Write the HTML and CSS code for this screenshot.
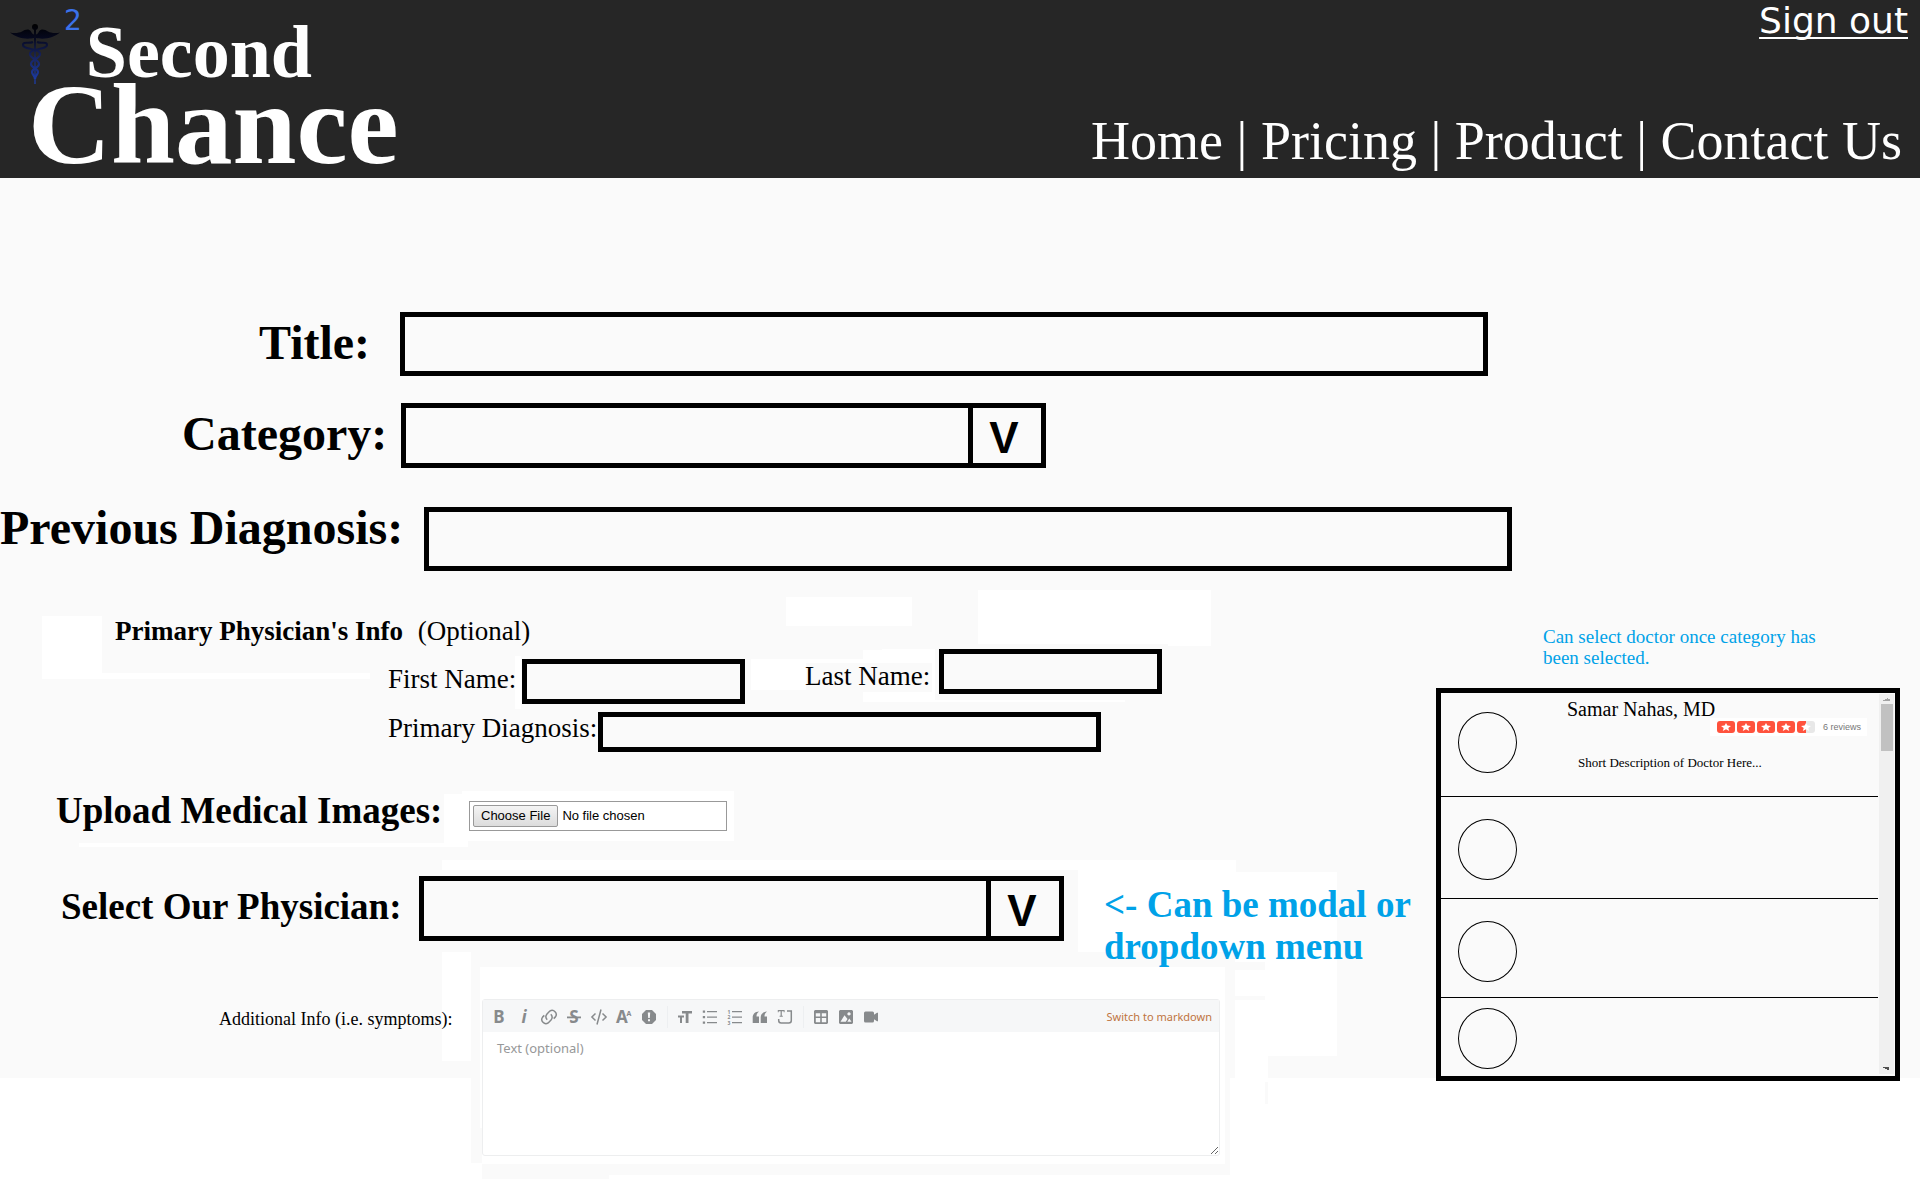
FILE: index.html
```html
<!DOCTYPE html>
<html lang="en">
<head>
<meta charset="utf-8">
<title>Second Chance</title>
<link rel="stylesheet" href="styles.css">
</head>
<body>
<header class="site-header">
  <a class="brand" href="#">
    <span class="brand-top">
      <svg class="brand-icon" viewBox="0 0 52 60" fill="none" aria-hidden="true">
        <defs>
          <linearGradient id="staff" gradientUnits="userSpaceOnUse" x1="0" y1="0" x2="0" y2="60">
            <stop offset="0" stop-color="#000"/><stop offset=".25" stop-color="#060920"/><stop offset=".55" stop-color="#172462"/><stop offset="1" stop-color="#1c3fae"/>
          </linearGradient>
        </defs>
        <g fill="url(#staff)">
          <circle cx="26" cy="3" r="3"/>
          <path d="M25 4h2l-.4 56h-1.200z"/>
          <path d="M25 14C21 15 14 15 9 13 6 12 3 10 1 8.500c5 1 9 .5 12-1 3-2 7-3 9 0 1 2 2 3 3 3zM27 14c4 1 11 1 16-1 3-1 6-3 8-4.500-5 1-9 .5-12-1-3-2-7-3-9 0-1 2-2 3-3 3z"/>
        </g>
        <g stroke="url(#staff)" stroke-width="2.200">
          <path d="M24 18c-4 2-10-1-10 3 0 5 17 3 17 9 0 5-9 5-9 10 0 4 7 4 7 8 0 3-3 3-3 7"/>
          <path d="M28 18c4 2 10-1 10 3 0 5-17 3-17 9 0 5 9 5 9 10 0 4-7 4-7 8 0 3 3 3 3 7"/>
        </g>
      </svg>
      <span class="brand-two">2</span>
      <span class="brand-second">Second</span>
    </span>
    <span class="brand-chance">Chance</span>
  </a>
  <div class="header-side">
    <a class="sign-out" href="#">Sign out</a>
    <nav class="main-nav">
      <a href="#">Home</a> | <a href="#">Pricing</a> | <a href="#">Product</a> | <a href="#">Contact Us</a>
    </nav>
  </div>
</header>

<main class="page">
  <svg class="backdrop" aria-hidden="true">
    <rect width="100%" height="900" fill="#fafafa"/>
    <path fill="#fff" d="M42 438h60v57h268v6H42zM515 478h6v53h-6zM786 419h126v29H786zM978 412h233v56h-43v-2H978zM751 481h112v-9h19v-1h53v51h190v2H863v-12h-57v0h-55zM462 613h272v50H468v6H79v-4h365v-49h18zM442 682h794v12h101v184h-69v22h-33V774H471v109h-29z"/>
    <path fill="#fafafa" d="M806 485h126v29H806zM419 692h659v82H419zM471 784h794v8h-40v26h40v4h-35v175H609v4H482v-16h-11zM1265 904h3v22h-3z"/>
    <path fill="#fff" d="M480 789h745v197H482v-36h-2z"/>
  </svg>

  <form class="consult">
    <div class="field field-title">
      <label class="label-xl" for="title">Title:</label>
      <input class="box" id="title" type="text">
    </div>
    <div class="field field-category">
      <label class="label-xl" for="category">Category:</label>
      <div class="picker"><select id="category"><option></option></select><span aria-hidden="true">V</span></div>
    </div>
    <div class="field field-previous">
      <label class="label-xl" for="previous">Previous Diagnosis:</label>
      <input class="box" id="previous" type="text">
    </div>

    <div class="lower">
      <div class="details">
        <fieldset class="physician">
          <legend><b>Primary Physician's Info</b> <span>(Optional)</span></legend>
          <div class="names">
            <div class="name first"><label for="first">First Name:</label><input class="box" id="first" type="text"></div>
            <div class="name last"><label for="last">Last Name:</label><input class="box" id="last" type="text"></div>
          </div>
          <div class="primary"><label for="primary">Primary Diagnosis:</label><input class="box" id="primary" type="text"></div>
        </fieldset>

        <div class="field field-upload">
          <label class="label-lg" for="images">Upload Medical Images:</label>
          <div class="upload"><input id="images" type="file"></div>
        </div>

        <div class="field field-select">
          <label class="label-lg" for="physician">Select Our Physician:</label>
          <div class="picker"><select id="physician"><option></option></select><span aria-hidden="true">V</span></div>
          <p class="note note-lg">&lt;- Can be modal or dropdown menu</p>
        </div>

        <div class="field field-info">
          <label for="info">Additional Info (i.e. symptoms):</label>
          <div class="editor">
            <div class="toolbar">
              <button type="button" aria-label="Bold"><svg viewBox="0 0 16 16"><text x="8" y="14" font-size="17" font-weight="700">B</text></svg></button>
              <button type="button" aria-label="Italic"><svg viewBox="0 0 16 16"><text x="8" y="14" font-size="17" font-weight="700" font-style="italic">i</text></svg></button>
              <button type="button" aria-label="Link"><svg viewBox="0 0 16 16" class="line"><path d="M6.200 10.700A4.300 4.300 0 0 1 6 5L8.800 2.100a4.100 4.100 0 0 1 5.600 5.800l-1.700 1.700M9.800 5.300a4.300 4.300 0 0 1 .2 5.700l-2.800 2.900a4.100 4.100 0 0 1-5.600-5.800l1.700-1.700"/></svg></button>
              <button type="button" aria-label="Strikethrough"><svg viewBox="0 0 16 16"><text x="8" y="14" font-size="17" font-weight="700">S</text><path d="M1 7.500h14v1.800H1z"/></svg></button>
              <button type="button" aria-label="Code"><svg viewBox="0 0 16 16" class="line"><path d="M4.500 4.500.9 8l3.600 3.500M11.500 4.500 15.100 8l-3.600 3.500M10 .5 6 15.500"/></svg></button>
              <button type="button" aria-label="Superscript"><svg viewBox="0 0 16 16"><text x="6" y="14" font-size="17" font-weight="700">A</text><text x="13" y="7" font-size="7" font-weight="700">A</text></svg></button>
              <button type="button" aria-label="Spoiler"><svg viewBox="0 0 16 16"><path fill-rule="evenodd" d="M5 1h6l4 4v6l-4 4H5l-4-4V5zM6.800 3.500 7.200 9h1.600l.4-5.500zM7 10.300v2h2v-2z"/></svg></button>
              <i class="rule"></i>
              <button type="button" aria-label="Heading"><svg viewBox="0 0 16 16"><path d="M5 2h10v2.500h-3.500V14H8.700V4.500H5zM1 6.500h6v1.900H5V14H3V8.400H1z"/></svg></button>
              <button type="button" aria-label="Bulleted list"><svg viewBox="0 0 16 16"><path d="M5 2h10v1.300H5zM5 7.500h10v1.300H5zM5 13h10v1.300H5zM.8 1.400h2.300v2.300H.8zM.8 7h2.300v2.300H.8zM.8 12.500h2.300v2.300H.8z"/></svg></button>
              <button type="button" aria-label="Numbered list"><svg viewBox="0 0 16 16"><path d="M5 2h10v1.300H5zM5 7.500h10v1.300H5zM5 13h10v1.300H5z"/><g font-size="5" font-weight="700"><text x="2" y="4.500">1</text><text x="2" y="10">2</text><text x="2" y="15.500">3</text></g></svg></button>
              <button type="button" aria-label="Quote"><svg viewBox="0 0 16 16"><path d="M7 2.500C5 4 4.500 5.500 4.500 7.500H7V14H.7V8.500C.7 5 3 2.800 7 2.500zM15 2.500c-2 1.500-2.500 3-2.500 5H15V14H8.700V8.500C8.700 5 11 2.800 15 2.500z"/></svg></button>
              <button type="button" aria-label="Code block"><svg viewBox="0 0 16 16"><path class="stroke" d="M10 2h4.300v9.500q0 2.500-2.500 2.500H4.200q-2.500 0-2.500-2.500V10"/><path d="M.8 1h6.800v2.200h-.9v-1H4.800v4.600h1v1H2.600v-1h1V2.200h-1.900v1H.8z"/></svg></button>
              <i class="rule"></i>
              <button type="button" aria-label="Table"><svg viewBox="0 0 16 16"><path fill-rule="evenodd" d="M2 1h12l1 1v12l-1 1H2l-1-1V2zM2.800 4.300v3.200h4.400V4.300zM8.800 4.300v3.200h4.400V4.300zM2.800 9v4.200h4.400V9zM8.800 9v4.200h4.400V9z"/></svg></button>
              <button type="button" aria-label="Image"><svg viewBox="0 0 16 16"><path fill-rule="evenodd" d="M2 1h12l1 1v12l-1 1H2l-1-1V2zM2.500 12.800l4-6.600 3 3.800-1.700 2.800zM9.300 12.800l2-3.300 2.200 3.300zM11 3.300a1.600 1.600 0 1 0 .01 0z"/></svg></button>
              <button type="button" aria-label="Video"><svg viewBox="0 0 16 16"><path d="M2.500 2.500h7q1.500 0 1.500 1.500v1.800l3-2h1v8.500h-1l-3-2V12q0 1.500-1.500 1.500h-7Q1 13.500 1 12V4q0-1.500 1.500-1.500z"/></svg></button>
              <a class="switch" href="#">Switch to markdown</a>
            </div>
            <textarea id="info" placeholder="Text (optional)"></textarea>
          </div>
        </div>
      </div>

      <aside class="doctors">
        <p class="note">Can select doctor once category has been selected.</p>
        <div class="panel">
          <ul class="doctor-list">
            <li>
              <span class="avatar"></span>
              <div class="doctor">
                <h2>Samar Nahas, MD</h2>
                <div class="rating">
                  <span class="star"></span><span class="star"></span><span class="star"></span><span class="star"></span><span class="star half"></span>
                  <span class="reviews">6 reviews</span>
                </div>
                <p>Short Description of Doctor Here...</p>
              </div>
            </li>
            <li><span class="avatar"></span></li>
            <li><span class="avatar"></span></li>
            <li><span class="avatar"></span></li>
          </ul>
          <div class="scroller" aria-hidden="true">
            <svg viewBox="0 0 7 3"><path d="M0 3V2h2V1h2V0h1v1h2v2z" fill="#a3a3a3"/></svg>
            <span class="thumb"></span>
            <svg viewBox="0 0 7 3"><path d="M0 0h6v3H4V2H2V1H0z" fill="#505050"/></svg>
          </div>
        </div>
      </aside>
    </div>
  </form>
</main>
</body>
</html>
```
FILE: styles.css
```css
* { box-sizing: border-box; }

body {
  margin: 0;
  background: #fff;
  color: #000;
  font-family: "Liberation Serif", "Times New Roman", serif;
}

p, h2, ul { margin: 0; padding: 0; font-weight: 400; }

input, select, textarea, button { font: inherit; border-radius: 0; }

/* Header */
.site-header {
  display: flex;
  justify-content: space-between;
  min-height: 178px;
  background: #262626;
}

.brand {
  display: flex;
  flex-direction: column;
  color: #fff;
  font-weight: 700;
  text-decoration: none;
}

.brand-top { display: flex; align-items: flex-start; padding-left: 9px; }
.brand-icon { width: 52px; height: 60px; margin-top: 24px; }

.brand-two {
  margin: 7px 4px 0 3px;
  color: #3b72ea;
  font: 28px/28px "DejaVu Sans", sans-serif;
}

.brand-second { margin-top: 19px; font-size: 74px; line-height: 66px; }
.brand-chance { padding-left: 28px; font-size: 115px; line-height: 80px; }

.header-side {
  display: flex;
  flex-direction: column;
  justify-content: space-between;
  align-items: flex-end;
  padding: 0 12px 7px 0;
}

.header-side a { color: #fff; text-decoration: none; }

.header-side .sign-out {
  font: 36px/42px "DejaVu Sans", sans-serif;
  text-decoration: underline 2px;
  text-underline-offset: 4px;
  text-decoration-skip-ink: none;
}

.main-nav { padding-right: 6px; color: #fff; font-size: 54px; line-height: 60px; }

/* Page */
.page { position: relative; isolation: isolate; padding: 134px 0 23px; }
.backdrop { position: absolute; inset: 0; z-index: -1; width: 100%; height: 100%; }

.field { display: flex; align-items: flex-start; }
.label-xl, .label-lg { flex: none; font-weight: 700; white-space: nowrap; line-height: 62px; }
.label-xl { font-size: 48px; }
.label-lg { font-size: 37px; }

.box { min-width: 0; padding: 0 12px; background: #fafafa; border: 5px solid #000; font-size: 27px; }

.field > .box { width: 1088px; height: 64px; }

.picker {
  display: flex;
  flex: none;
  width: 645px;
  height: 65px;
  background: #fafafa;
  border: 5px solid #000;
}

.picker select {
  flex: 1;
  min-width: 0;
  padding: 0 12px;
  background: none;
  border: 0;
  appearance: none;
  font-size: 27px;
}

.picker span {
  width: 73px;
  padding-right: 6px;
  border-left: 5px solid #000;
  font: 700 44px/60px "Liberation Sans", Arial, sans-serif;
  text-align: center;
}

.field-title { padding-left: 259px; }
.field-title label { width: 141px; }
.field-category { margin-top: 27px; padding-left: 182px; }
.field-category label { width: 219px; }
.field-previous { margin-top: 39px; }
.field-previous label { width: 424px; line-height: 42px; }

.lower {
  display: grid;
  grid-template-columns: minmax(0, 1fr) 464px;
  align-items: start;
  padding-right: 20px;
}

/* Primary physician */
.physician { margin: 0; padding: 44px 0 0; border: 0; font-size: 27px; }
.physician legend { float: left; width: 100%; padding: 0 0 0 115px; line-height: 32px; }
.physician legend span { margin-left: 8px; }
.names { clear: both; display: flex; gap: 60px; padding: 2px 0 0 388px; }
.name { display: flex; align-items: flex-start; }
.name label { width: 134px; }
.name .box { width: 223px; height: 45px; }
.first { margin-top: 10px; }
.first label { line-height: 40px; }
.last label { line-height: 54px; }
.primary { display: flex; margin-top: 8px; padding-left: 388px; }
.primary label { width: 210px; line-height: 32px; }
.primary .box { width: 503px; height: 40px; }

/* Upload */
.field-upload { margin-top: 38px; padding-left: 56px; }
.field-upload label { width: 405px; line-height: 42px; }
.upload { padding: 11px 7px 10px 8px; }

.upload input {
  display: block;
  width: 258px;
  height: 30px;
  padding: 3px;
  background: #fff;
  border: 1px solid #999;
  font: 13px/22px "Liberation Sans", Arial, sans-serif;
}

.upload input::file-selector-button {
  height: 22px;
  margin: 0 4px 0 0;
  padding: 0 7px;
  background: linear-gradient(#f4f4f4, #dcdcdc);
  border: 1px solid #999;
  border-radius: 2px;
  font: inherit;
  line-height: 20px;
}

/* Physician picker */
.field-select { margin-top: 35px; padding-left: 61px; }
.field-select label { width: 358px; }
.note { color: #00a2e8; font-size: 19px; line-height: 21px; }
.note-lg { margin: 8px 0 0 40px; font-size: 37px; font-weight: 700; line-height: 42px; }

/* Additional info */
.field-info { margin-top: 31px; padding-left: 219px; font-size: 18px; line-height: 40px; }
.field-info label { width: 263px; }

.editor {
  width: 738px;
  background: #fff;
  border: 1px solid #edeeef;
  border-radius: 3px;
  font-family: "Noto Sans", sans-serif;
}

.toolbar { display: flex; align-items: center; height: 32px; padding: 2px 7px 0 4px; background: #f6f7f8; }

.toolbar button { display: flex; width: 25px; padding: 0 4px; background: none; border: 0; }
.toolbar svg { width: 16px; height: 16px; overflow: visible; fill: #878a8c; text-anchor: middle; font-family: "Noto Sans", sans-serif; }
.toolbar .line, .toolbar .stroke { fill: none; stroke: #878a8c; stroke-width: 1.5; }
.rule { width: 1px; height: 22px; margin: 0 5px; background: #edeff1; }
.switch { margin-left: auto; color: #bf7440; font-size: 11px; line-height: 20px; text-decoration: none; }

.editor textarea {
  display: block;
  width: 100%;
  height: 123px;
  padding: 7px 14px;
  background: none;
  border: 0;
  font-size: 13px;
  line-height: 18px;
}

.editor textarea::placeholder { color: #979899; }

/* Doctor list */
.doctors { padding-top: 55px; }
.doctors .note { width: 290px; margin-left: 107px; }

.panel {
  display: flex;
  margin-top: 20px;
  background: #fafafa;
  border: 5px solid #000;
}

.doctor-list { flex: 1; display: grid; grid-template-rows: 104px 102px 99px 78px; list-style: none; }
.doctor-list li { display: flex; gap: 50px; padding: 22px 0 0 17px; border-bottom: 1px solid #000; }
.doctor-list li:first-child { padding-top: 7px; }
.doctor-list li:first-child .avatar { margin-top: 12px; }
.doctor-list li:last-child { padding-top: 10px; border: 0; }
.avatar { flex: none; width: 59px; height: 61px; border: 1px solid #000; border-radius: 50%; }

.doctor { flex: 1; }
.doctor h2 { font-size: 20px; line-height: 18px; }
.doctor p { margin: 19px 0 0 11px; font-size: 13px; line-height: 16px; }

.rating {
  display: flex;
  align-items: center;
  gap: 2px;
  width: 157px;
  height: 18px;
  margin-left: 143px;
  padding-left: 7px;
  background: #fff;
}

.star { position: relative; width: 18px; height: 12px; background: #ff523d; border-radius: 3px; }
.star.half { background: linear-gradient(90deg, #ff523d 50%, #e8e8e8 50%); }

.star::after {
  content: "";
  position: absolute;
  inset: 2px 4px;
  background: #fff;
  clip-path: polygon(50% 0, 64% 32%, 100% 36%, 73% 61%, 82% 100%, 50% 78%, 18% 100%, 27% 61%, 0 36%, 36% 32%);
}

.reviews { margin-left: 6px; color: #777; font: 9px/12px "Liberation Sans", Arial, sans-serif; }

.scroller {
  display: flex;
  flex-direction: column;
  align-items: center;
  width: 15px;
  margin: 1px 1px 2px;
  padding: 4px 0;
  background: #f0f0f0;
}

.scroller svg { width: 7px; height: 3px; }
.thumb { width: 12px; height: 47px; margin: 3px 0 auto; background: #c1c1c1; }
```
